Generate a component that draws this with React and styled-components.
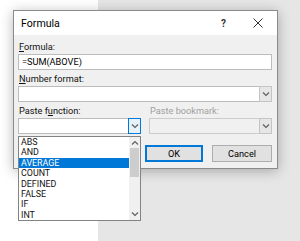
import React from 'react';
import styled, { createGlobalStyle } from 'styled-components';

const functions = ['ABS', 'AND', 'AVERAGE', 'COUNT', 'DEFINED', 'FALSE', 'IF', 'INT'];

const GlobalStyle = createGlobalStyle`
  html, body {
    margin: 0;
    height: 241px;
    overflow: hidden;
  }
  body {
    background: linear-gradient(to right, #ffffff 98px, #e6e6e6 98px);
    font-family: Roboto, "Noto Sans", sans-serif;
    color: #111;
  }
`;

const Chevron = ({ up }) => (
    <svg width="8" height="5" viewBox="0 0 8 5">
        <polyline
            points={up ? '1,4.5 4,1.5 7,4.5' : '1,0.5 4,3.5 7,0.5'}
            fill="none"
            stroke="#606060"
            strokeWidth="1.2"
        />
    </svg>
);

const App = () => {
    return (
        <Page>
            <GlobalStyle />
            <Dialog>
                <TitleBar>
                    <Title>Formula</Title>
                    <TitleButtons>
                        <Help>?</Help>
                        <svg width="10" height="10" viewBox="0 0 10 10">
                            <path d="M0.5 0.5 L9.5 9.5 M9.5 0.5 L0.5 9.5" stroke="#333" strokeWidth="1" />
                        </svg>
                    </TitleButtons>
                </TitleBar>
                <Body>
                    <Field>
                        <Label><u>F</u>ormula:</Label>
                        <TextBox>=SUM(ABOVE)</TextBox>
                    </Field>
                    <Field>
                        <Label><u>N</u>umber format:</Label>
                        <Combo>
                            <ComboText />
                            <DropButton><Chevron /></DropButton>
                        </Combo>
                    </Field>
                    <Columns>
                        <Column>
                            <Label>Paste f<u>u</u>nction:</Label>
                            <Combo>
                                <ComboText />
                                <DropButton active><Chevron /></DropButton>
                            </Combo>
                            <List>
                                <Items>
                                    {functions.map(name => (
                                        <Item key={name} selected={name === 'AVERAGE'}>{name}</Item>
                                    ))}
                                </Items>
                                <ScrollBar>
                                    <ScrollArrow><Chevron up /></ScrollArrow>
                                    <ScrollTrack>
                                        <Thumb />
                                    </ScrollTrack>
                                    <ScrollArrow><Chevron /></ScrollArrow>
                                </ScrollBar>
                            </List>
                        </Column>
                        <Column>
                            <Label disabled>Paste bookmark:</Label>
                            <Combo disabled>
                                <ComboText />
                                <DropButton><Chevron /></DropButton>
                            </Combo>
                        </Column>
                    </Columns>
                    <Buttons>
                        <Button primary>OK</Button>
                        <Button>Cancel</Button>
                    </Buttons>
                </Body>
            </Dialog>
        </Page>
    );
};
export default App;

const Page = styled.div`
  padding: 10px 0 0 13px;
`;

const Dialog = styled.div`
  position: relative;
  width: 263px;
  height: 157px;
  border: 1px solid #8a8a8a;
  background: #f0f0f0;
  box-shadow: 0 2px 12px rgba(0, 0, 0, 0.28);
`;

const TitleBar = styled.div`
  display: flex;
  align-items: center;
  justify-content: space-between;
  height: 24px;
  padding: 0 14px 0 7px;
  background: #ffffff;
`;

const Title = styled.span`
  font-size: 10.6px;
  color: #000;
`;

const TitleButtons = styled.div`
  display: flex;
  align-items: center;
  gap: 27px;
`;

const Help = styled.span`
  font-size: 10px;
  font-weight: 700;
  color: #333;
`;

const Body = styled.div`
  display: flex;
  flex-direction: column;
  gap: 2px;
  padding: 5px 5px 0 4px;
`;

const Field = styled.div`
  display: flex;
  flex-direction: column;
`;

const Label = styled.div`
  height: 13px;
  line-height: 13px;
  margin-bottom: 1px;
  padding-left: 1px;
  font-size: 9.2px;
  color: ${props => (props.disabled ? '#a0a0a0' : '#111')};
  white-space: nowrap;
`;

const TextBox = styled.div`
  box-sizing: border-box;
  height: 16px;
  line-height: 14px;
  padding-left: 3px;
  border: 1px solid #bcbcbc;
  background: #fff;
  font-size: 9.2px;
  color: #000;
`;

const Combo = styled.div`
  box-sizing: border-box;
  display: flex;
  height: 16px;
  border: 1px solid ${props => (props.disabled ? '#cccccc' : '#bcbcbc')};
  background: ${props => (props.disabled ? '#f0f0f0' : '#ffffff')};
`;

const ComboText = styled.div`
  flex: 1;
`;

const DropButton = styled.div`
  box-sizing: border-box;
  display: flex;
  align-items: center;
  justify-content: center;
  width: 13px;
  margin: -1px -1px -1px 0;
  border: 1px solid ${props => (props.active ? '#0078d7' : '#c4c4c4')};
  background: ${props => (props.active ? '#e5f1fb' : '#e6e6e6')};
`;

const Columns = styled.div`
  display: grid;
  grid-template-columns: 123px 123px;
  gap: 8px;
`;

const Column = styled.div`
  position: relative;
  display: flex;
  flex-direction: column;
`;

const List = styled.div`
  position: absolute;
  top: calc(100% + 2px);
  left: 0;
  z-index: 2;
  display: flex;
  width: 121px;
  border: 1px solid #838383;
  background: #ffffff;
`;

const Items = styled.div`
  flex: 1;
`;

const Item = styled.div`
  height: 10.4px;
  line-height: 10.4px;
  padding-left: 2px;
  font-size: 8.9px;
  background: ${props => (props.selected ? '#0078d7' : 'transparent')};
  color: ${props => (props.selected ? '#ffffff' : '#111')};
`;

const ScrollBar = styled.div`
  display: flex;
  flex-direction: column;
  width: 11px;
  background: #f0f0f0;
`;

const ScrollArrow = styled.div`
  display: flex;
  align-items: center;
  justify-content: center;
  height: 11px;
`;

const ScrollTrack = styled.div`
  flex: 1;
`;

const Thumb = styled.div`
  height: 29px;
  margin: 0 1px;
  background: #cdcdcd;
`;

const Buttons = styled.div`
  display: flex;
  justify-content: flex-end;
  gap: 9px;
  margin-top: 9px;
`;

const Button = styled.div`
  box-sizing: border-box;
  display: flex;
  align-items: center;
  justify-content: center;
  width: ${props => (props.primary ? '58px' : '60px')};
  height: 17px;
  border: ${props => (props.primary ? '2px solid #0078d7' : '1px solid #adadad')};
  background: #e1e1e1;
  font-size: 9.2px;
  color: #000;
`;
